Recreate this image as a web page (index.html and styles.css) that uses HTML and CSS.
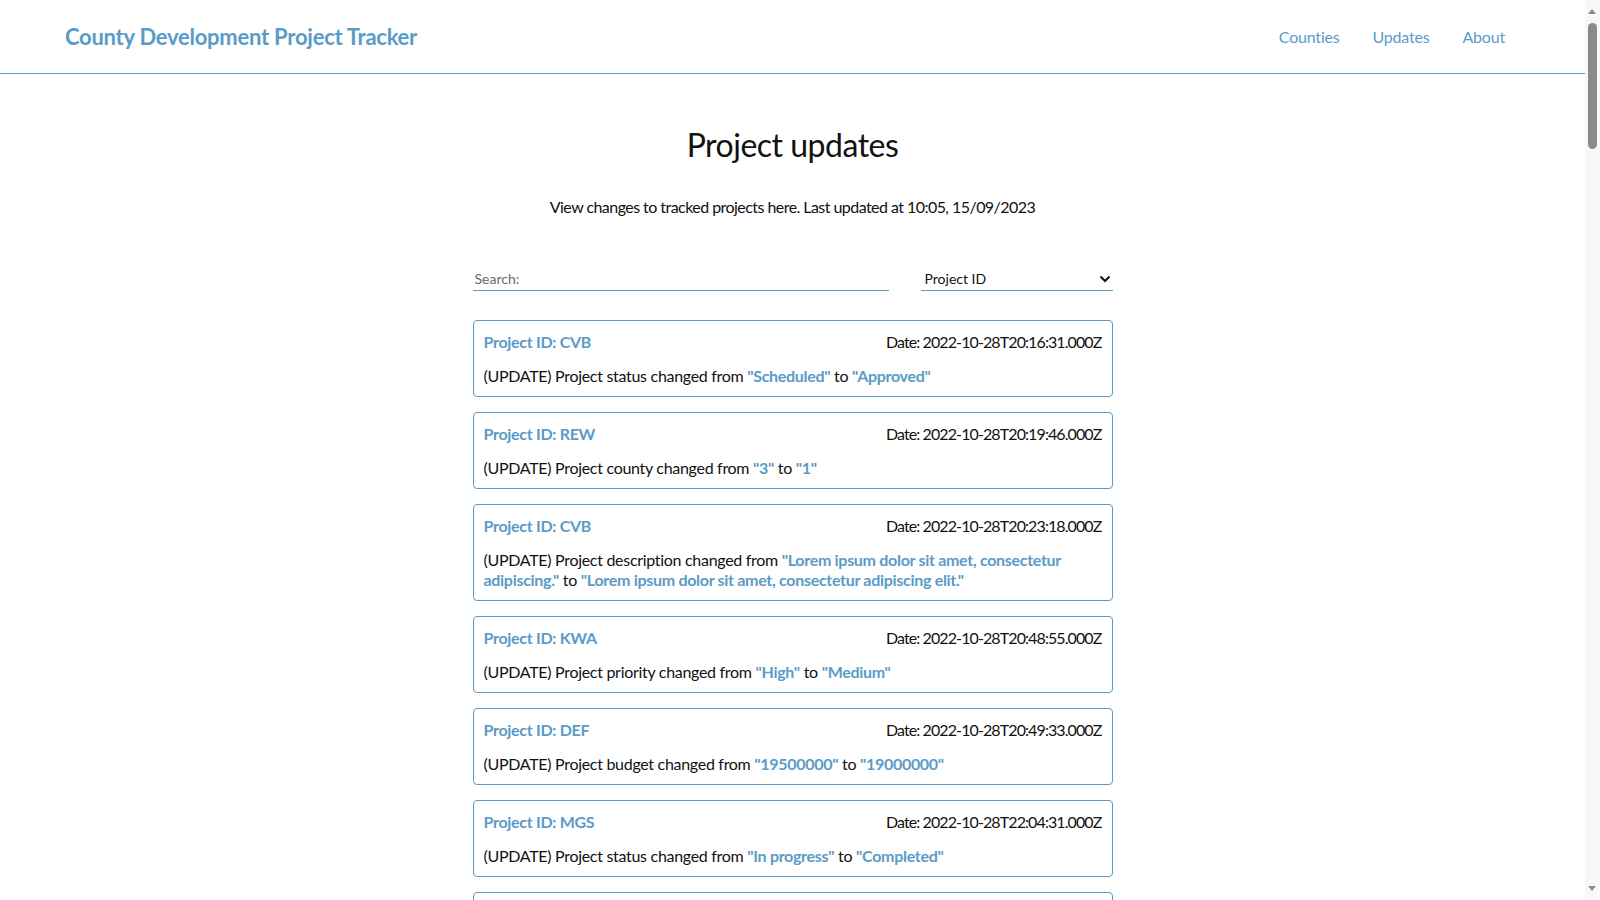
FILE: index.html
```html
<!DOCTYPE html>
<html lang="en">
<head>
<meta charset="utf-8">
<title>Project updates</title>
<link rel="stylesheet" href="styles.css">
</head>
<body>
<div class="page">
<header class="topbar">
  <a class="brand" href="#">County Development Project Tracker</a>
  <nav class="nav">
    <a href="#">Counties</a>
    <a href="#">Updates</a>
    <a href="#">About</a>
  </nav>
</header>
<main class="main">
  <h1 class="title">Project updates</h1>
  <p class="lead">View changes to tracked projects here. Last updated at 10:05, 15/09/2023</p>
  <div class="filters">
    <input class="search" type="text" placeholder="Search:">
    <select class="sort">
      <option>Project ID</option>
      <option>Date</option>
    </select>
  </div>
  <ul class="updates">
    <li class="card">
      <div class="card-head"><span class="pid">Project ID: CVB</span><span class="date">Date: 2022-10-28T20:16:31.000Z</span></div>
      <p class="card-body">(UPDATE) Project status changed from <b>"Scheduled"</b> to <b>"Approved"</b></p>
    </li>
    <li class="card">
      <div class="card-head"><span class="pid">Project ID: REW</span><span class="date">Date: 2022-10-28T20:19:46.000Z</span></div>
      <p class="card-body">(UPDATE) Project county changed from <b>"3"</b> to <b>"1"</b></p>
    </li>
    <li class="card">
      <div class="card-head"><span class="pid">Project ID: CVB</span><span class="date">Date: 2022-10-28T20:23:18.000Z</span></div>
      <p class="card-body">(UPDATE) Project description changed from <b>"Lorem ipsum dolor sit amet, consectetur adipiscing."</b> to <b>"Lorem ipsum dolor sit amet, consectetur adipiscing elit."</b></p>
    </li>
    <li class="card">
      <div class="card-head"><span class="pid">Project ID: KWA</span><span class="date">Date: 2022-10-28T20:48:55.000Z</span></div>
      <p class="card-body">(UPDATE) Project priority changed from <b>"High"</b> to <b>"Medium"</b></p>
    </li>
    <li class="card">
      <div class="card-head"><span class="pid">Project ID: DEF</span><span class="date">Date: 2022-10-28T20:49:33.000Z</span></div>
      <p class="card-body">(UPDATE) Project budget changed from <b>"19500000"</b> to <b>"19000000"</b></p>
    </li>
    <li class="card">
      <div class="card-head"><span class="pid">Project ID: MGS</span><span class="date">Date: 2022-10-28T22:04:31.000Z</span></div>
      <p class="card-body">(UPDATE) Project status changed from <b>"In progress"</b> to <b>"Completed"</b></p>
    </li>
    <li class="card">
      <div class="card-head"><span class="pid">Project ID: REW</span><span class="date">Date: 2022-10-28T22:10:12.000Z</span></div>
      <p class="card-body">(UPDATE) Project status changed from <b>"Approved"</b> to <b>"In progress"</b></p>
    </li>
    <li class="card">
      <div class="card-head"><span class="pid">Project ID: KWA</span><span class="date">Date: 2022-10-28T22:15:40.000Z</span></div>
      <p class="card-body">(UPDATE) Project budget changed from <b>"2500000"</b> to <b>"2750000"</b></p>
    </li>
  </ul>
</main>
</div>
<div class="scrollbar" aria-hidden="true">
  <span class="sb-up"></span>
  <span class="sb-thumb"></span>
  <span class="sb-down"></span>
</div>
</body>
</html>
```

FILE: styles.css
```css
* { box-sizing: border-box; }

html, body {
  margin: 0;
  padding: 0;
}

body {
  font-family: "Lato", "Liberation Sans", sans-serif;
  font-size: 16px;
  color: #111;
  background: #fff;
}

.page {
  margin-right: 15px;
}

.topbar {
  height: 74px;
  display: flex;
  align-items: center;
  justify-content: space-between;
  padding: 0 80px 0 65px;
  border-bottom: 1px solid #5a9bc7;
}

.brand {
  color: #5a9bc7;
  font-size: 22px;
  font-weight: 700;
  letter-spacing: -0.25px;
  text-decoration: none;
}

.nav {
  display: flex;
  gap: 33px;
}

.nav a {
  color: #5a9bc7;
  text-decoration: none;
  font-size: 16px;
  letter-spacing: -0.2px;
}

.main {
  width: 640px;
  margin: 0 auto;
  padding-top: 50px;
}

.title {
  margin: 0;
  text-align: center;
  font-size: 32px;
  font-weight: 400;
  line-height: 42px;
  letter-spacing: -0.5px;
}

.lead {
  margin: 31px 0 0;
  text-align: center;
  line-height: 20px;
  letter-spacing: -0.55px;
}

.filters {
  display: flex;
  justify-content: space-between;
  align-items: flex-end;
  margin-top: 50px;
}

.search {
  width: 416px;
  height: 24px;
  border: none;
  border-bottom: 1px solid #5a9bc7;
  padding: 0 2px;
  font: inherit;
  font-size: 14px;
  outline: none;
}

.search::placeholder {
  color: #6b6b6b;
}

.sort {
  width: 192px;
  height: 24px;
  border: none;
  border-bottom: 1px solid #5a9bc7;
  border-radius: 0;
  padding: 0 4px;
  font: inherit;
  font-size: 14px;
  color: #111;
  background: #fff url("data:image/svg+xml;utf8,<svg xmlns='http://www.w3.org/2000/svg' width='12' height='8' viewBox='0 0 12 8'><path d='M1.5 1.5 6 6l4.5-4.5' fill='none' stroke='%23111' stroke-width='2'/></svg>") no-repeat right 2px center;
  -webkit-appearance: none;
  appearance: none;
}

.updates {
  list-style: none;
  margin: 29px 0 0;
  padding: 0;
  display: flex;
  flex-direction: column;
  gap: 15px;
  padding-bottom: 40px;
}

.card {
  border: 1px solid #5a9bc7;
  border-radius: 4px;
  padding: 10px 10px 10px;
  letter-spacing: -0.3px;
}

.card-head {
  display: flex;
  justify-content: space-between;
  line-height: 22px;
}

.pid {
  color: #5a9bc7;
  font-weight: 700;
}

.date {
  letter-spacing: -0.9px;
}

.card-body {
  margin: 13px 0 0;
  line-height: 20px;
}

.card-body b {
  color: #5a9bc7;
  font-weight: 700;
}

.scrollbar {
  position: fixed;
  top: 0;
  right: 0;
  width: 15px;
  height: 100vh;
  background: #f8f8f8;
}

.sb-up,
.sb-down {
  position: absolute;
  left: 3px;
  width: 0;
  height: 0;
  border-left: 4.5px solid transparent;
  border-right: 4.5px solid transparent;
}

.sb-up {
  top: 9px;
  border-bottom: 5px solid #8a8a8a;
}

.sb-down {
  bottom: 9px;
  border-top: 5px solid #8a8a8a;
}

.sb-thumb {
  position: absolute;
  top: 23px;
  left: 3px;
  width: 9px;
  height: 126px;
  border-radius: 5px;
  background: #8a8a8a;
}
```
